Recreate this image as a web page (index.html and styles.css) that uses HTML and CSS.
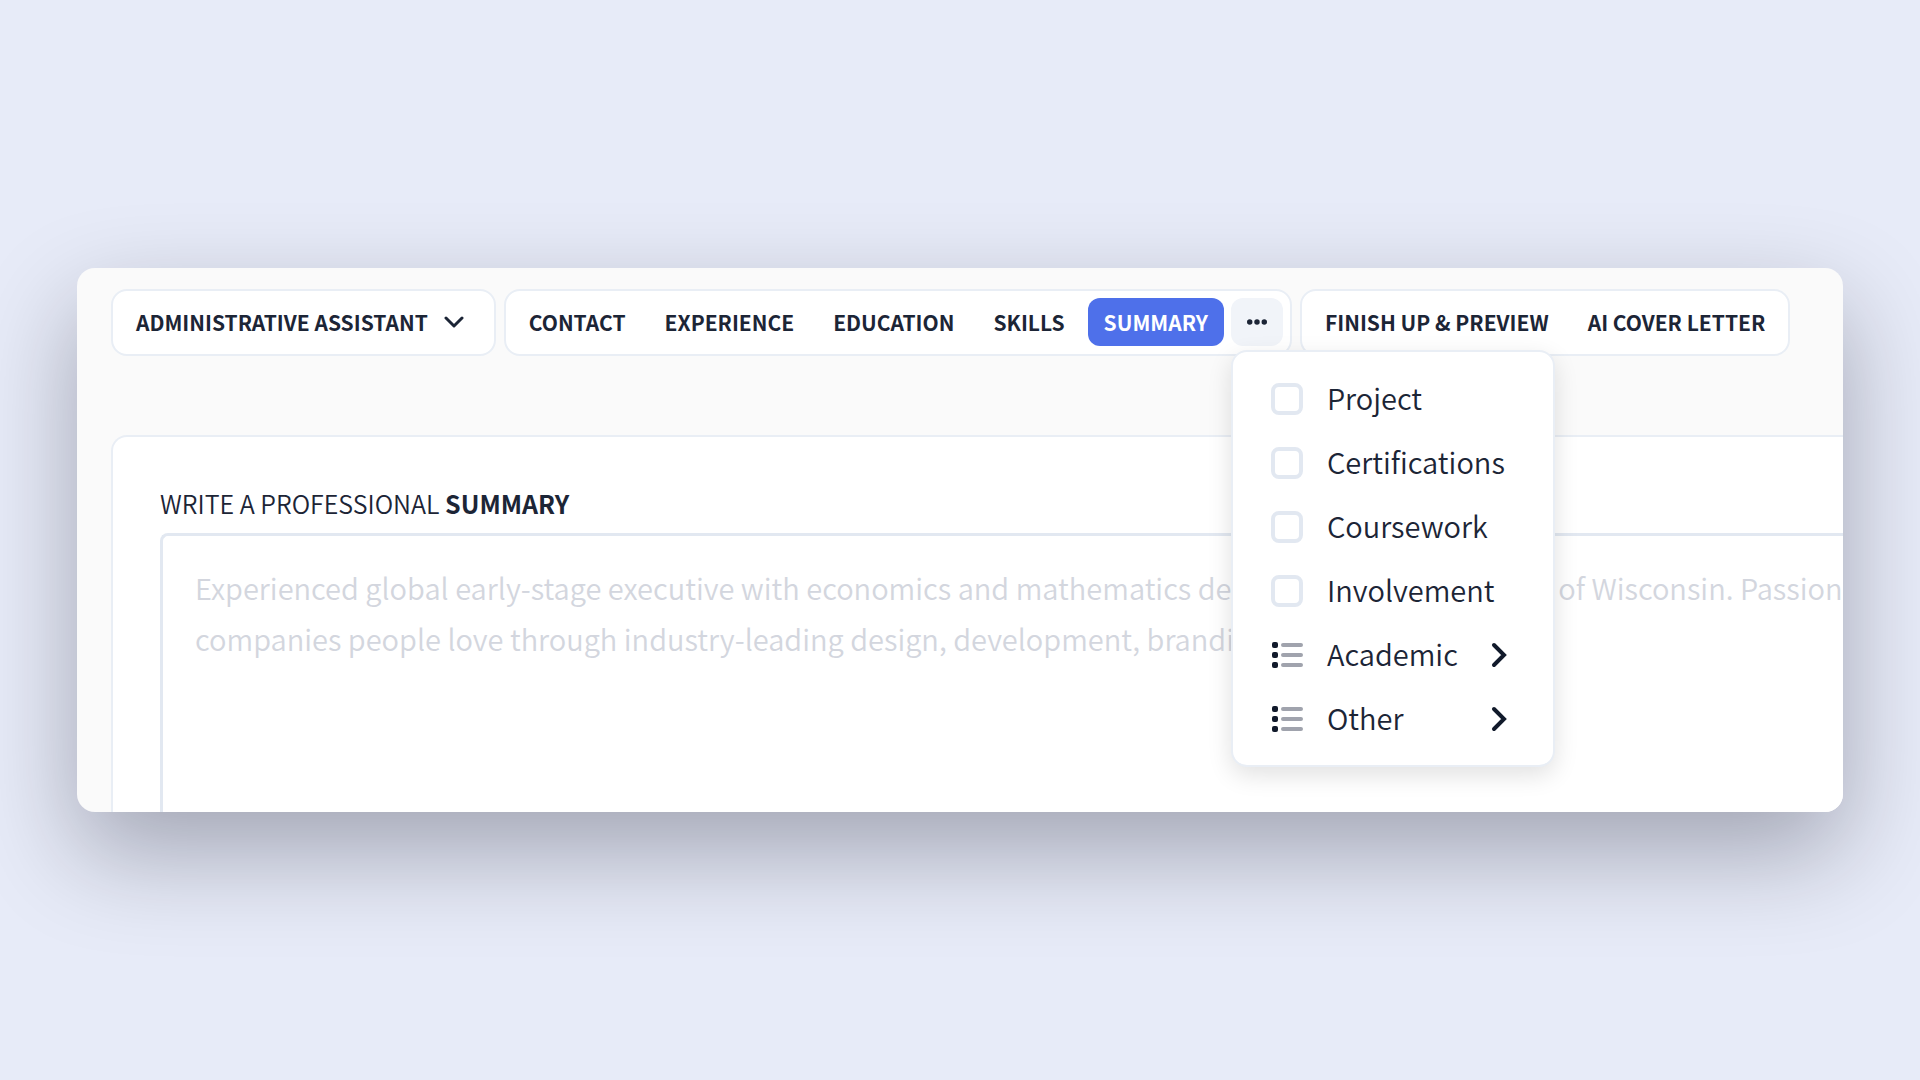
FILE: index.html
```html
<!doctype html>
<html lang="en">
<head>
    <meta charset="UTF-8">
    <meta name="viewport" content="width=device-width, initial-scale=1.0">
    <title>Resume Builder</title>
    <link rel="stylesheet" href="styles.css">
</head>
<body>
<!-- icons -->
<svg class="sprite" aria-hidden="true">
    <symbol id="icon-list" viewBox="0 0 32 28">
        <g fill="#111a2b">
            <rect x="1" y="1" width="6" height="6" rx="2"/>
            <rect x="1" y="11" width="6" height="6" rx="2"/>
            <rect x="1" y="21" width="6" height="6" rx="2"/>
        </g>
        <path d="M12 4h18M12 14h18M12 24h18" stroke="#a0a3ad" stroke-width="4" stroke-linecap="round"/>
    </symbol>
    <symbol id="icon-right" viewBox="0 0 16 26">
        <path d="M3 3l10 10L3 23" fill="none" stroke="#111a2b" stroke-width="4" stroke-linecap="round" stroke-linejoin="miter"/>
    </symbol>
</svg>

<main class="window">
    <nav class="toolbar">
        <div class="group">
            <button type="button" class="tab">
                <span>ADMINISTRATIVE ASSISTANT</span>
                <svg class="icon-down" viewBox="0 0 20 12" aria-hidden="true">
                    <path d="M2 2l8 8 8-8" fill="none" stroke="#1c2536" stroke-width="3" stroke-linecap="round" stroke-linejoin="round"/>
                </svg>
            </button>
        </div>
        <div class="group">
            <a href="#contact" class="tab"><span>CONTACT</span></a>
            <a href="#experience" class="tab"><span>EXPERIENCE</span></a>
            <a href="#education" class="tab"><span>EDUCATION</span></a>
            <a href="#skills" class="tab"><span>SKILLS</span></a>
            <a href="#summary" class="tab cur"><span>SUMMARY</span></a>
            <div class="more">
                <button type="button" class="more-btn" aria-label="More sections" aria-expanded="true">
                    <svg class="icon-dots" viewBox="0 0 22 6" fill="#1c2536" aria-hidden="true">
                        <circle cx="3" cy="3" r="3"/>
                        <circle cx="11" cy="3" r="3"/>
                        <circle cx="19" cy="3" r="3"/>
                    </svg>
                </button>
                <div class="menu">
                    <label class="item"><input type="checkbox" class="check"><span>Project</span></label>
                    <label class="item"><input type="checkbox" class="check"><span>Certifications</span></label>
                    <label class="item"><input type="checkbox" class="check"><span>Coursework</span></label>
                    <label class="item"><input type="checkbox" class="check"><span>Involvement</span></label>
                    <button type="button" class="item">
                        <svg class="icon-list" aria-hidden="true"><use href="#icon-list"/></svg>
                        <span>Academic</span>
                        <svg class="icon-right" aria-hidden="true"><use href="#icon-right"/></svg>
                    </button>
                    <button type="button" class="item">
                        <svg class="icon-list" aria-hidden="true"><use href="#icon-list"/></svg>
                        <span>Other</span>
                        <svg class="icon-right" aria-hidden="true"><use href="#icon-right"/></svg>
                    </button>
                </div>
            </div>
        </div>
        <div class="group">
            <a href="#finish" class="tab"><span>FINISH UP &amp; PREVIEW</span></a>
            <a href="#cover" class="tab"><span>AI COVER LETTER</span></a>
        </div>
    </nav>

    <section class="panel" id="summary">
        <label class="title" for="summaryText">WRITE A PROFESSIONAL <b>SUMMARY</b></label>
        <textarea class="text" id="summaryText" placeholder="Experienced global early-stage executive with economics and mathematics degree from the University of Wisconsin. Passion for building&#10;companies people love through industry-leading design, development, branding, and marketing."></textarea>
    </section>
</main>
</body>
</html>
```
FILE: styles.css
```css
* {
    margin: 0;
    padding: 0;
    box-sizing: border-box;
}

body {
    min-height: 100vh;
    padding: 0 77px;
    display: flex;
    align-items: center;
    background: #e7ebf8;
    color: #1c2536;
    font-family: "Noto Sans CJK SC", "Open Sans", sans-serif;
    font-weight: 350;
}

button,
textarea {
    font: inherit;
    color: inherit;
    border: none;
    background: none;
}

a {
    color: inherit;
    text-decoration: none;
}

.sprite {
    position: absolute;
    width: 0;
    height: 0;
}

.window {
    flex: 1;
    min-width: 0;
    padding: 21px 0 0 34px;
    border-radius: 18px;
    background: #fafafa;
    box-shadow: 0 40px 100px rgba(0, 0, 20, 0.3);
    overflow: hidden;
}

/* toolbar */
.toolbar {
    display: flex;
    gap: 8px;
}

.group {
    display: flex;
    align-items: flex-start;
    gap: 7px;
    padding: 7px 7px 8px;
    border: 2px solid #e9eef5;
    border-radius: 16px;
    background: #fff;
}

.tab {
    display: flex;
    align-items: center;
    height: 48px;
    padding: 0 16px;
    border-radius: 12px;
    font-size: 21px;
    font-weight: 700;
    white-space: nowrap;
    cursor: pointer;
}

.tab span {
    padding-bottom: 1px;
}

.tab.cur {
    background: #4e70ea;
    color: #fff;
}

.icon-down {
    width: 20px;
    height: 12px;
    margin: 0 7px 0 16px;
}

.more {
    position: relative;
}

.more-btn {
    display: flex;
    align-items: center;
    justify-content: center;
    width: 52px;
    height: 48px;
    border-radius: 12px;
    background: #f1f4f9;
    cursor: pointer;
}

.icon-dots {
    width: 20px;
    height: 6px;
}

/* dropdown under the dots */
.menu {
    position: absolute;
    z-index: 2;
    top: 52px;
    left: 0;
    width: 324px;
    padding: 15px 46px 14px 38px;
    border: 2px solid #e9eef5;
    border-radius: 16px;
    background: #fff;
    box-shadow: 0 8px 24px rgba(0, 0, 0, 0.12);
}

.item {
    display: flex;
    align-items: center;
    gap: 24px;
    width: 100%;
    height: 64px;
    font-size: 29px;
    white-space: nowrap;
    cursor: pointer;
}

.item span {
    padding-bottom: 4px;
}

.check {
    appearance: none;
    width: 32px;
    height: 32px;
    border: 4px solid #e2e8f1;
    border-radius: 8px;
    background: #fff;
}

.icon-list {
    width: 32px;
    height: 28px;
}

.icon-right {
    width: 16px;
    height: 26px;
    margin-left: auto;
}

/* summary form */
.panel {
    margin-top: 79px;
    padding: 48px 0 0 47px;
    border: 2px solid #e9eef5;
    border-width: 2px 0 0 2px;
    border-radius: 16px 0 0 0;
    background: #fff;
}

.title {
    display: block;
    height: 48px;
    line-height: 36px;
    font-size: 25px;
}

.text {
    display: block;
    width: 100%;
    height: 279px;
    padding: 26px 0 0 32px;
    border: 3px solid #e2e8f1;
    border-width: 3px 0 0 3px;
    border-radius: 8px 0 0 0;
    outline: none;
    resize: none;
    overflow: hidden;
    white-space: pre;
    font-size: 29px;
    line-height: 51px;
}

.text::placeholder {
    color: #d3d6de;
    opacity: 1;
}
```
